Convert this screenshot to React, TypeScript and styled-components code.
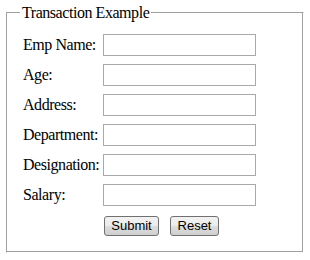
import { Fragment } from "react";
import styled, { createGlobalStyle } from "styled-components";

const GlobalStyle = createGlobalStyle`
  body {
    margin: 0;
    background: #fff;
    font-family: "Liberation Serif", "Times New Roman", serif;
    font-size: 16px;
    color: #000;
  }
`;

const Fieldset = styled.fieldset`
  box-sizing: border-box;
  width: 298px;
  margin: 3px 0 0 6px;
  padding: 0 12px 16px 13px;
  border: 1px solid;
  border-color: #a0a0a0 #fff #fff #a0a0a0;
  box-shadow: inset -1px -1px 0 #a0a0a0;
`;

const Legend = styled.legend`
  padding: 0 2px;
  line-height: 19px;
  letter-spacing: -0.45px;
`;

const Form = styled.form`
  display: grid;
  grid-template-columns: 80px 153px;
  row-gap: 8px;
  align-items: center;
  margin: 12px 0 0 3px;
`;

const Label = styled.label`
  white-space: nowrap;
  line-height: 18px;
  letter-spacing: -0.45px;
`;

const Input = styled.input`
  box-sizing: border-box;
  width: 153px;
  height: 22px;
  margin: 0;
  padding: 1px 3px;
  border: 1px solid #a9a9a9;
  font-family: "Liberation Sans", Arial, sans-serif;
  font-size: 13px;
  outline: none;
`;

const Buttons = styled.div`
  grid-column: 2;
  display: flex;
  gap: 11px;
  margin: 2px 0 0 1px;
`;

const Button = styled.button<{ $w: number }>`
  box-sizing: border-box;
  width: ${(p) => p.$w}px;
  height: 20px;
  margin: 0;
  padding: 0;
  border: 1px solid #707070;
  border-radius: 3px;
  background: linear-gradient(#f2f2f2 0%, #ebebeb 50%, #dddddd 51%, #cfcfcf 100%);
  font-family: "Liberation Sans", Arial, sans-serif;
  font-size: 13px;
  color: #000;
  line-height: 18px;
`;

const fields = ["Emp Name:", "Age:", "Address:", "Department:", "Designation:", "Salary:"];

const App = () => {
  return (
    <>
      <GlobalStyle />
      <Fieldset>
        <Legend>Transaction Example</Legend>
        <Form onSubmit={(e) => e.preventDefault()}>
          {fields.map((f) => (
            <Fragment key={f}>
              <Label>{f}</Label>
              <Input type="text" />
            </Fragment>
          ))}
          <Buttons>
            <Button $w={55} type="submit">Submit</Button>
            <Button $w={49} type="reset">Reset</Button>
          </Buttons>
        </Form>
      </Fieldset>
    </>
  );
};

export default App;
